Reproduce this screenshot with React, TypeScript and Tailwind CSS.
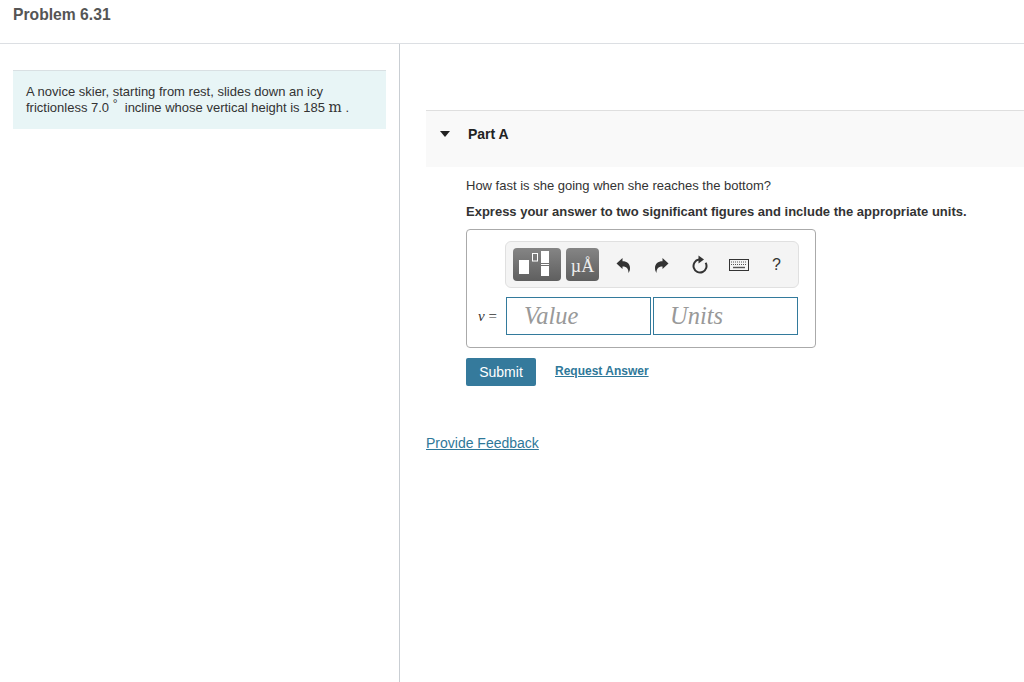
import React from 'react';

const sans = "font-['Liberation_Sans',Arial,sans-serif]";

const TemplatesIcon = () => (
  <svg width="48" height="33" viewBox="0 0 48 33">
    <rect x="6" y="12" width="10" height="14" fill="#fff" />
    <rect x="19.5" y="5.5" width="5" height="7.5" fill="none" stroke="#fff" strokeWidth="1" />
    <rect x="28" y="3" width="8" height="12" fill="#fff" />
    <rect x="28" y="16" width="8" height="1" fill="#fff" />
    <rect x="28" y="18" width="8" height="10" fill="#fff" />
  </svg>
);

const ArrowIcon = ({ flip }: { flip?: boolean }) => (
  <svg width="15" height="16" viewBox="0 0 15 16" className={flip ? '-scale-x-100' : ''}>
    <path
      d="M0.5 6.5 L6.5 1 V4.3 C11 4.3 14 7 14 11 C14 13 13.5 14.5 12.5 16 C12.5 12 11 9.5 6.5 9.5 V12 Z"
      fill="#333"
    />
  </svg>
);

const ResetIcon = () => (
  <svg width="18" height="19" viewBox="0 0 18 19">
    <path d="M14.6 7.7 A6.5 6.5 0 1 1 8 4.6" fill="none" stroke="#333" strokeWidth="2" />
    <path d="M7.5 0.5 L13 4.5 L7.5 8.5 Z" fill="#333" />
  </svg>
);

const KeyboardIcon = () => (
  <svg width="20" height="12" viewBox="0 0 20 12">
    <rect x="0.5" y="0.5" width="19" height="11" fill="#f4f4f4" stroke="#333" />
    <path d="M2 3h16M2 5.5h16" stroke="#555" strokeWidth="1.2" strokeDasharray="1 1" />
    <path d="M4 8.5h12" stroke="#555" strokeWidth="1.4" />
  </svg>
);

export default function App() {
  return (
    <div className={`${sans} flex h-[682px] flex-col overflow-hidden bg-white text-[#333]`}>
      {/* Title bar */}
      <div className="h-[44px] shrink-0 border-b border-[#dcdfe3] pl-[13px] pt-[5px]">
        <h1 className="text-[15.7px] font-bold leading-[20px] text-[#555]">Problem 6.31</h1>
      </div>

      <div className="flex min-h-0 flex-1">
        {/* Left pane */}
        <div className="w-[400px] shrink-0 border-r border-[#c9ced3] pl-[13px] pr-[13px] pt-[26px]">
          <div className="h-[59px] border-t border-[#d9e0e3] bg-[#e8f5f6] pl-[13px] pt-[13px] text-[13px] leading-[16px]">
            <p>A novice skier, starting from rest, slides down an icy</p>
            <p>
              frictionless 7.0 <span className="relative top-[-4px] text-[12px] leading-none">°</span>&nbsp; incline whose vertical height is 185{' '}
              <span className="font-['DejaVu_Serif',serif] text-[14px] leading-none">m</span> .
            </p>
          </div>
        </div>

        {/* Right pane */}
        <div className="min-w-0 flex-1 pl-[26px] pt-[66px]">
          <div className="flex h-[57px] items-start border-t border-[#dfdfdf] bg-[#f9f9f9] pl-[14px] pt-[15px]">
            <div className="mt-[5px] h-0 w-0 border-x-[5.5px] border-t-[6px] border-x-transparent border-t-[#222]" />
            <h2 className="ml-[18px] text-[14px] font-bold leading-[17px] text-[#222]">Part A</h2>
          </div>

          <div className="pl-[40px]">
            <p className="mt-[11px] text-[13px] leading-[16px]">How fast is she going when she reaches the bottom?</p>
            <p className="mt-[10px] text-[13px] font-bold leading-[16px]">
              Express your answer to two significant figures and include the appropriate units.
            </p>

            {/* Answer box */}
            <div className="mt-[9px] h-[119px] w-[350px] rounded-[4px] border border-[#aaa] pl-[38px] pt-[11px]">
              <div className="flex h-[47px] w-[294px] items-center rounded-[6px] border border-[#e0e0e0] bg-[#f4f4f4] pl-[7px]">
                <div className="h-[33px] w-[48px] rounded-[4px] bg-gradient-to-b from-[#858585] to-[#5f5f5f]">
                  <TemplatesIcon />
                </div>
                <div className="ml-[5px] flex h-[33px] w-[33px] items-end justify-center rounded-[4px] bg-gradient-to-b from-[#858585] to-[#5f5f5f] pb-[6px] font-['Liberation_Serif',serif] text-[18px] leading-[18px] text-[#eee]">
                  µÅ
                </div>
                <div className="ml-[17px]"><ArrowIcon /></div>
                <div className="ml-[23px]"><ArrowIcon flip /></div>
                <div className="ml-[22px]"><ResetIcon /></div>
                <div className="ml-[20px]"><KeyboardIcon /></div>
                <div className="ml-[23px] text-[16px] leading-[16px] text-[#333]">?</div>
              </div>

              <div className="relative ml-[1px] mt-[9px] flex gap-[2px]">
                <span className="absolute left-[-28px] top-[12px] font-['Liberation_Serif',serif] text-[15px] leading-[14px]">
                  <i>v</i> =
                </span>
                <div className="h-[38px] w-[145px] border border-[#337a9c] pl-[17px] font-['Liberation_Serif',serif] text-[24.5px] italic leading-[36px] text-[#999]">
                  Value
                </div>
                <div className="h-[38px] w-[145px] border border-[#337a9c] pl-[16px] font-['Liberation_Serif',serif] text-[24.5px] italic leading-[36px] text-[#999]">
                  Units
                </div>
              </div>
            </div>

            <div className="mt-[10px] flex items-start">
              <button className="h-[28px] w-[70px] rounded-[2px] bg-[#357a9c] text-[14px] text-white">Submit</button>
              <a className="ml-[19px] mt-[5px] text-[12px] font-bold leading-[16px] text-[#2f7899] underline">Request Answer</a>
            </div>
          </div>

          <a className="mt-[48px] block text-[14px] leading-[18px] text-[#2f7899] underline">Provide Feedback</a>
        </div>
      </div>
    </div>
  );
}
